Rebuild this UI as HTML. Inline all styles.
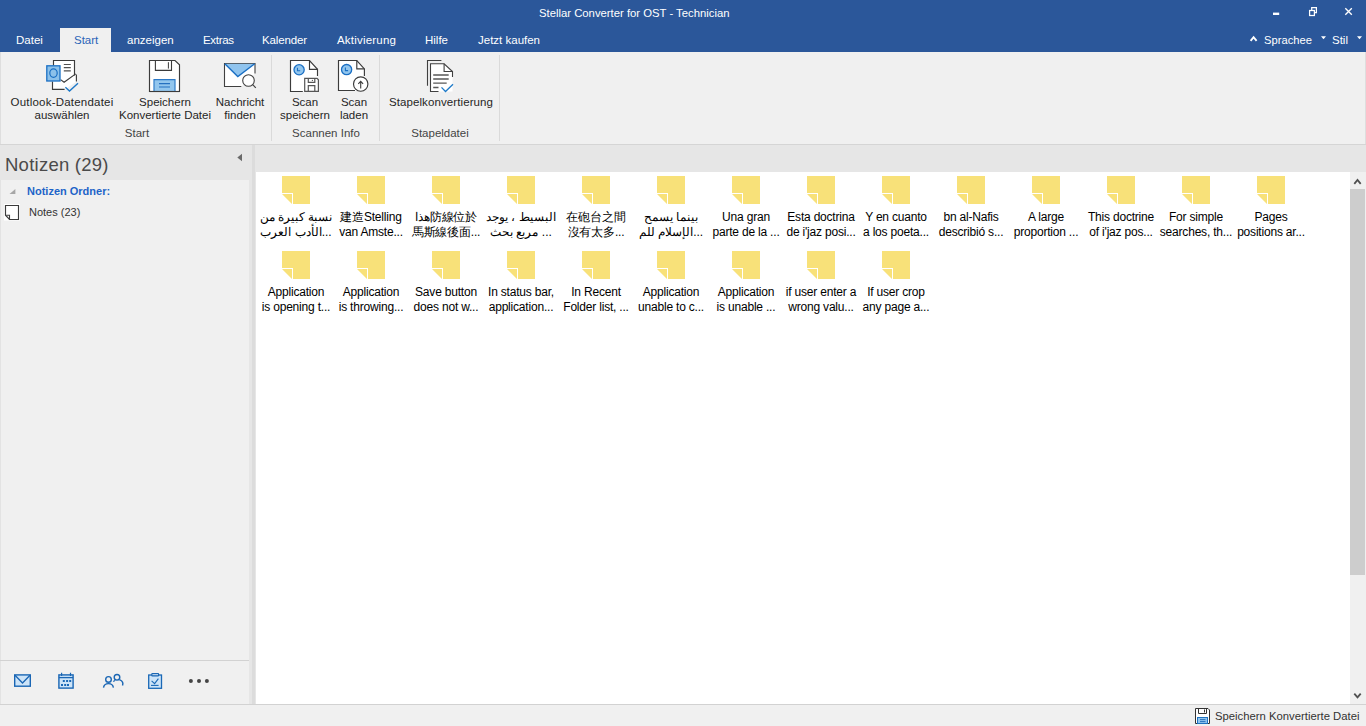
<!DOCTYPE html>
<html><head><meta charset="utf-8">
<style>
*{box-sizing:border-box;margin:0;padding:0}
html,body{width:1366px;height:726px;overflow:hidden;background:#f0f0f0;font-family:"Liberation Sans",sans-serif;font-size:11.5px;color:#262626}
.a{position:absolute;white-space:nowrap}
#title{left:0;top:0;width:1366px;height:52px;background:#2b579a}
.tt{left:539px;top:5px;color:#fff;font-size:11.3px;line-height:16px}
.tab{position:absolute;top:34px;color:#fff;font-size:11.5px;line-height:13px;white-space:nowrap}
.rb{position:absolute;text-align:center;white-space:nowrap;color:#262626;font-size:11.5px;line-height:13px}
.gl{position:absolute;top:127px;color:#444;font-size:11.5px;line-height:13px;white-space:nowrap;text-align:center}
.sep{position:absolute;top:55px;width:1px;height:86px;background:#dadada}
.note{position:absolute;width:75px;text-align:center;font-size:12px;letter-spacing:-0.2px;line-height:15px;color:#000;white-space:nowrap}
svg{position:absolute;overflow:visible}
</style></head><body>
<div id="title" class="a"></div>
<div class="a tt">Stellar Converter for OST - Technician</div>
<!-- window controls -->
<svg style="left:0;top:0" width="1366" height="28">
  <rect x="1273" y="12.6" width="6.2" height="2.4" fill="#fff"/>
  <path d="M1311.7,10V7.6H1316.4V12.5H1314.5" stroke="#fff" stroke-width="1.25" fill="none"/>
  <rect x="1309.6" y="10.5" width="4.8" height="5" stroke="#fff" stroke-width="1.25" fill="none"/>
  <path d="M1345.3,8.3L1351.8,14.8M1351.8,8.3L1345.3,14.8" stroke="#fff" stroke-width="1.35" fill="none"/>
</svg>
<div class="a" style="left:60px;top:28px;width:51px;height:24px;background:#f0f0f0"></div>
<div class="tab" style="left:16px">Datei</div>
<div class="tab" style="left:74px;color:#2b64b8">Start</div>
<div class="tab" style="left:127px">anzeigen</div>
<div class="tab" style="left:203px;letter-spacing:-0.3px">Extras</div>
<div class="tab" style="left:262px;letter-spacing:-0.15px">Kalender</div>
<div class="tab" style="left:337px;letter-spacing:0.2px">Aktivierung</div>
<div class="tab" style="left:425px">Hilfe</div>
<div class="tab" style="left:478px">Jetzt kaufen</div>
<div class="tab" style="left:1264px;font-size:11.2px">Sprachee</div>
<div class="tab" style="left:1332px">Stil</div>
<svg style="left:0;top:0" width="1366" height="52">
  <path d="M1250.6,40.8L1253.6,37.2L1256.6,40.8" stroke="#fff" stroke-width="1.9" fill="none"/>
  <path d="M1321,36.3h5l-2.5,3z" fill="#fff"/>
  <path d="M1357,36.3h5l-2.5,3z" fill="#fff"/>
</svg>

<!-- ribbon -->
<div class="a" style="left:0;top:52px;width:1366px;height:93px;background:#f0f0f0;border-bottom:1px solid #d5d5d5"></div>
<div class="a" style="left:0;top:52px;width:1px;height:92px;background:#dedede"></div>
<div class="a" style="left:1365px;top:52px;width:1px;height:92px;background:#dedede"></div>
<div class="sep" style="left:271px"></div>
<div class="sep" style="left:379px"></div>
<div class="sep" style="left:499px"></div>

<svg style="left:0;top:0" width="520" height="100">
  <!-- outlook -->
  <path d="M53,60.5H74.5V75L76.5,74.4V81.5L65,89.5H52.5V81.5H53Z" fill="#fff"/>
  <path d="M53.5,65.5V60.5H74.5V75.5" fill="none" stroke="#3b3b3b" stroke-width="1.15"/>
  <path d="M60.6,79.6L64.1,82.3L75.7,73.9M76.4,74.4V81.5M52.5,81.5V89.4H64.6" fill="none" stroke="#3b3b3b" stroke-width="1.15"/>
  <path d="M63.8,64.5H70.8M63.8,67.6H70.8M63.8,70.9H70.8" stroke="#505050" stroke-width="1.1"/>
  <rect x="46.8" y="65.8" width="13.2" height="15.2" fill="#8cc1ea" stroke="#1a6fc4" stroke-width="1.3"/>
  <ellipse cx="53.5" cy="73.1" rx="3.7" ry="4.2" fill="none" stroke="#1a6fc4" stroke-width="1.2"/>
  <path d="M65.4,87.3L69.5,91L78,83.3" fill="none" stroke="#1e78c8" stroke-width="1.4"/>
  <!-- save -->
  <path d="M149.5,60.5H175L179.5,64.8V91.5H149.5Z" fill="#fff" stroke="#3b3b3b" stroke-width="1.15"/>
  <path d="M155.4,60.5V70.4H171.5V60.5" fill="none" stroke="#3b3b3b" stroke-width="1.1"/>
  <path d="M168.4,62.2V68.6" stroke="#3b3b3b" stroke-width="1"/>
  <rect x="153.8" y="79.6" width="21.4" height="11.4" fill="#92c6ee"/>
  <path d="M154,91V79.6H175V91" fill="none" stroke="#2b78c6" stroke-width="1.1"/>
  <path d="M159,83.7H170M159,87H170" stroke="#2570c0" stroke-width="1.2"/>
  <path d="M149.5,91.5H179.5" stroke="#3b3b3b" stroke-width="1.15"/>
  <!-- envelope -->
  <path d="M241.3,86.5H224.5V63.5H255V73.4" fill="#fff" stroke="#404040" stroke-width="1.1"/>
  <path d="M224.8,63.8H254.7L238,76.3Z" fill="#90c4ee"/>
  <path d="M224.8,63.8L237.8,76.6L254.7,63.8" fill="none" stroke="#1a6fc4" stroke-width="1.4"/>
  <circle cx="248.5" cy="80.5" r="5.8" fill="#fff" stroke="#404040" stroke-width="1.1"/>
  <path d="M252.7,84.7L255.8,87.8" stroke="#404040" stroke-width="1.2"/>
  <!-- scan speichern -->
  <path d="M290.5,60.5H309.5L317.5,69.3V91.5H290.5Z" fill="#fff"/>
  <path d="M302.8,91.5H290.5V60.5H309.5L317.5,69.3V76" fill="none" stroke="#3b3b3b" stroke-width="1.15"/>
  <path d="M309.5,60.5V69.3H317.5" fill="none" stroke="#3b3b3b" stroke-width="1.15"/>
  <circle cx="299.1" cy="69.8" r="5.1" fill="#92c6ee" stroke="#1a6fc4" stroke-width="1.3"/>
  <path d="M297.5,67.8V70.7H300.2" fill="none" stroke="#1a6fc4" stroke-width="1.1"/>
  <path d="M304.7,91.3V78.3H317L318.4,79.8V91.3Z" fill="#fff" stroke="#555" stroke-width="1.2"/>
  <path d="M308.3,78.5V82.4H314.8V78.5M308.3,91V85.6H314.8V91" fill="none" stroke="#555" stroke-width="1.2"/>
  <circle cx="312.4" cy="80.4" r="0.6" fill="#555"/>
  <!-- scan laden -->
  <path d="M338.5,60.5H356.8L364.4,68.9V90.5H338.5Z" fill="#fff"/>
  <path d="M364.4,76V68.9L356.8,60.5H338.5V90.5H355" fill="none" stroke="#3b3b3b" stroke-width="1.15"/>
  <path d="M356.8,60.5V68.9H364.4" fill="none" stroke="#3b3b3b" stroke-width="1.15"/>
  <circle cx="346.6" cy="69.6" r="5.1" fill="#92c6ee" stroke="#1a6fc4" stroke-width="1.3"/>
  <path d="M345.4,67.6V70.6H348.1" fill="none" stroke="#1a6fc4" stroke-width="1.1"/>
  <circle cx="360.7" cy="84" r="7.2" fill="#fff" stroke="#3b3b3b" stroke-width="1.15"/>
  <path d="M360.7,88.5V81.5M358.3,83.8L360.7,81.3L363.1,83.8" fill="none" stroke="#3b3b3b" stroke-width="1.1"/>
  <!-- stapel -->
  <path d="M427.5,85.7V60.5H441.4" fill="none" stroke="#404040" stroke-width="1.1"/>
  <path d="M430.5,91.5V63.8H444.1L452.5,71.5V91.5Z" fill="#fff" stroke="none"/>
  <path d="M452.5,77V71.5L444.1,63.8H430.5V91.5H438.5" fill="none" stroke="#404040" stroke-width="1.1"/>
  <path d="M444.1,63.8V71.5H452.5" fill="none" stroke="#404040" stroke-width="1.1"/>
  <path d="M433.2,75H448.7M433.2,79H448.7M433.2,83.2H446.7M433.2,87.5H438.5" stroke="#585858" stroke-width="1.3"/>
  <path d="M441.5,87.4L445.5,91.5L453,84.2" fill="none" stroke="#1e7ac8" stroke-width="1.3"/>
</svg>

<div class="rb" style="left:9px;top:96px;width:106px"><span style="letter-spacing:0.22px">Outlook-Datendatei</span><br>auswählen</div>
<div class="rb" style="left:115px;top:96px;width:100px">Speichern<br>Konvertierte Datei</div>
<div class="rb" style="left:213px;top:96px;width:54px">Nachricht<br>finden</div>
<div class="rb" style="left:279px;top:96px;width:52px">Scan<br>speichern</div>
<div class="rb" style="left:334px;top:96px;width:40px">Scan<br>laden</div>
<div class="rb" style="left:386px;top:96px;width:110px;letter-spacing:0.1px">Stapelkonvertierung</div>
<div class="gl" style="left:101px;width:72px">Start</div>
<div class="gl" style="left:280px;width:92px">Scannen Info</div>
<div class="gl" style="left:390px;width:100px">Stapeldatei</div>

<!-- left panel -->
<div class="a" style="left:0;top:145px;width:256px;height:559px;background:#e6e6e6"></div>
<div class="a" style="left:0;top:180px;width:249px;height:524px;background:#f0f0f0"></div>
<div class="a" style="left:252px;top:145px;width:3px;height:559px;background:#dcdcdc"></div>
<div class="a" style="left:0;top:180px;width:1px;height:524px;background:#e3e3e3"></div>
<div class="a" style="left:5px;top:154px;font-size:18.5px;line-height:22px;letter-spacing:0.25px;color:#4a4a4a">Notizen (29)</div>
<svg style="left:0;top:0" width="256" height="704">
  <path d="M237.3,157.5L242,153.8V161.2Z" fill="#6a6a6a"/>
  <path d="M9.5,194H15.4V189Z" fill="#a6a6a6"/>
  <rect x="4" y="204" width="16" height="16.5" fill="#fff"/>
  <path d="M5.5,205.5H18.5V219.5H9.5L5.5,215.2Z" fill="#fff" stroke="#3b3b3b" stroke-width="1.15"/>
  <path d="M6.2,215.2H9.5V219.2" fill="none" stroke="#3b3b3b" stroke-width="1.1"/>
  <rect x="0" y="660" width="249" height="1" fill="#d2d2d2"/>
  <!-- nav icons -->
  <rect x="14.7" y="674.9" width="15.6" height="11.3" fill="#cde4f8" stroke="#1a66b4" stroke-width="1.4"/>
  <path d="M15,675.2L22.5,683L30,675.2" fill="none" stroke="#1a66b4" stroke-width="1.3"/>
  <rect x="58.9" y="674.9" width="14.2" height="13.2" fill="#cde4f8" stroke="#1a66b4" stroke-width="1.4"/>
  <path d="M58.9,677.6H73.1" stroke="#1a66b4" stroke-width="1.3"/>
  <path d="M61.6,672.8V676M70.5,672.8V676" stroke="#1a66b4" stroke-width="1.2"/>
  <path d="M62.8,681h2M66.1,681h2M69.2,681h2M61,685h2M64.2,685h2M67,685h2" stroke="#1a68b6" stroke-width="1.8"/>
  <path d="M113.4,681.6A5.1,4.6 0 0 1 122.5,685.6" fill="none" stroke="#1a66b4" stroke-width="1.4"/>
  <circle cx="117" cy="677.3" r="3.6" fill="#f0f0f0"/>
  <circle cx="117" cy="677.3" r="2.8" fill="none" stroke="#1a66b4" stroke-width="1.4"/>
  <path d="M103.5,687.6A5,4.6 0 0 1 113.4,687.6" fill="none" stroke="#1a66b4" stroke-width="1.4"/>
  <circle cx="108.5" cy="679.4" r="3.6" fill="#f0f0f0"/>
  <circle cx="108.5" cy="679.4" r="2.8" fill="none" stroke="#1a66b4" stroke-width="1.4"/>
  <rect x="148.7" y="675" width="12.8" height="13.3" fill="#cde4f8" stroke="#1a68b6" stroke-width="1.3"/>
  <rect x="151.8" y="673.6" width="6.8" height="2.2" rx="0.6" fill="#e6f1fb" stroke="#1a66b4" stroke-width="1.2"/>
  <path d="M151.6,680.8L154.6,683.6L158.4,678.6" fill="none" stroke="#1a68b6" stroke-width="1.1"/>
  <path d="M151,685.4H158.6" stroke="#1a68b6" stroke-width="1.1"/>
  <circle cx="190.9" cy="680.9" r="2" fill="#444"/>
  <circle cx="199" cy="680.9" r="2" fill="#444"/>
  <circle cx="206.9" cy="680.9" r="2" fill="#444"/>
</svg>
<div class="a" style="left:27px;top:184px;font-size:11px;line-height:14px;font-weight:bold;color:#1e64c8">Notizen Ordner:</div>
<div class="a" style="left:29px;top:206px;font-size:11px;line-height:13px;color:#333">Notes (23)</div>

<!-- content -->
<div class="a" style="left:255px;top:145px;width:1111px;height:27px;background:#e6e6e6"></div>
<div class="a" style="left:256px;top:172px;width:1110px;height:532px;background:#fff"></div>
<div class="a" style="left:1350px;top:172px;width:16px;height:532px;background:#f0f0f0"></div>
<div class="a" style="left:1350px;top:189px;width:15px;height:386px;background:#cdcdcd"></div>
<svg style="left:0;top:0" width="1366" height="726">
  <path d="M1354.3,183.8L1357.5,180L1360.7,183.8" fill="none" stroke="#505050" stroke-width="1.8"/>
  <path d="M1354.3,693.6L1357.5,697.4L1360.7,693.6" fill="none" stroke="#505050" stroke-width="1.8"/>
</svg>
<div id="notes"><svg style="left:0;top:0" width="1366" height="300"><path fill="#f8e179" d="M282,176h28v28h-17v-11h-11zM282,194h10v10zM357,176h28v28h-17v-11h-11zM357,194h10v10zM432,176h28v28h-17v-11h-11zM432,194h10v10zM507,176h28v28h-17v-11h-11zM507,194h10v10zM582,176h28v28h-17v-11h-11zM582,194h10v10zM657,176h28v28h-17v-11h-11zM657,194h10v10zM732,176h28v28h-17v-11h-11zM732,194h10v10zM807,176h28v28h-17v-11h-11zM807,194h10v10zM882,176h28v28h-17v-11h-11zM882,194h10v10zM957,176h28v28h-17v-11h-11zM957,194h10v10zM1032,176h28v28h-17v-11h-11zM1032,194h10v10zM1107,176h28v28h-17v-11h-11zM1107,194h10v10zM1182,176h28v28h-17v-11h-11zM1182,194h10v10zM1257,176h28v28h-17v-11h-11zM1257,194h10v10zM282,251h28v28h-17v-11h-11zM282,269h10v10zM357,251h28v28h-17v-11h-11zM357,269h10v10zM432,251h28v28h-17v-11h-11zM432,269h10v10zM507,251h28v28h-17v-11h-11zM507,269h10v10zM582,251h28v28h-17v-11h-11zM582,269h10v10zM657,251h28v28h-17v-11h-11zM657,269h10v10zM732,251h28v28h-17v-11h-11zM732,269h10v10zM807,251h28v28h-17v-11h-11zM807,269h10v10zM882,251h28v28h-17v-11h-11zM882,269h10v10z"/></svg>
<div class="note" style="left:258.5px;top:209.5px">نسبة كبيرة من<br>الأدب العرب...</div>
<div class="note" style="left:333.5px;top:209.5px">建造Stelling<br>van Amste...</div>
<div class="note" style="left:408.5px;top:209.5px">هذا防線位於<br>馬斯線後面...</div>
<div class="note" style="left:483.5px;top:209.5px">البسيط ، يوجد<br>مربع بحث ...</div>
<div class="note" style="left:558.5px;top:209.5px">在砲台之間<br>沒有太多...</div>
<div class="note" style="left:633.5px;top:209.5px">بينما يسمح<br>الإسلام للم...</div>
<div class="note" style="left:708.5px;top:209.5px">Una gran<br>parte de la ...</div>
<div class="note" style="left:783.5px;top:209.5px">Esta doctrina<br>de i'jaz posi...</div>
<div class="note" style="left:858.5px;top:209.5px">Y en cuanto<br>a los poeta...</div>
<div class="note" style="left:933.5px;top:209.5px">bn al-Nafis<br>describió s...</div>
<div class="note" style="left:1008.5px;top:209.5px">A large<br>proportion ...</div>
<div class="note" style="left:1083.5px;top:209.5px">This doctrine<br>of i'jaz pos...</div>
<div class="note" style="left:1158.5px;top:209.5px">For simple<br>searches, th...</div>
<div class="note" style="left:1233.5px;top:209.5px">Pages<br>positions ar...</div>
<div class="note" style="left:258.5px;top:284.5px">Application<br>is opening t...</div>
<div class="note" style="left:333.5px;top:284.5px">Application<br>is throwing...</div>
<div class="note" style="left:408.5px;top:284.5px">Save button<br>does not w...</div>
<div class="note" style="left:483.5px;top:284.5px">In status bar,<br>application...</div>
<div class="note" style="left:558.5px;top:284.5px">In Recent<br>Folder list, ...</div>
<div class="note" style="left:633.5px;top:284.5px">Application<br>unable to c...</div>
<div class="note" style="left:708.5px;top:284.5px">Application<br>is unable ...</div>
<div class="note" style="left:783.5px;top:284.5px">if user enter a<br>wrong valu...</div>
<div class="note" style="left:858.5px;top:284.5px">If user crop<br>any page a...</div></div>

<!-- status -->
<div class="a" style="left:0;top:704px;width:1366px;height:22px;background:#f0f0f0;border-top:1px solid #d2d2d2"></div>
<svg style="left:0;top:0" width="1366" height="726">
  <path d="M1195.5,708.5H1208L1209.5,710V723.5H1195.5Z" fill="#fff" stroke="#333" stroke-width="1"/>
  <path d="M1198.5,708.5V713.5H1206.5V708.5M1204.5,709.5V712.5" fill="none" stroke="#333" stroke-width="1"/>
  <rect x="1197.5" y="717.5" width="10" height="6" fill="#90c4ee" stroke="#1e72c0" stroke-width="1"/>
  <path d="M1200,719.6H1205.5M1200,721.6H1205.5" stroke="#1e6ab8" stroke-width="0.9"/>
</svg>
<div class="a" style="left:1215px;top:709px;font-size:11.3px;line-height:14px;color:#333">Speichern Konvertierte Datei</div>
</body></html>
